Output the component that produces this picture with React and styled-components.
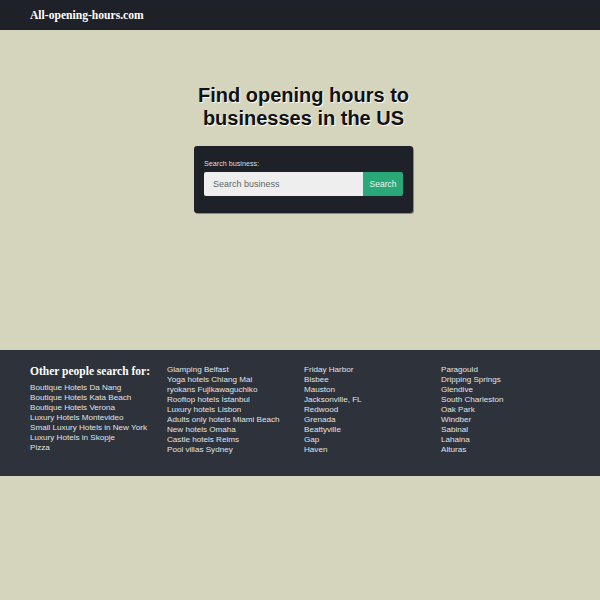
import React from "react";
import styled, { createGlobalStyle } from "styled-components";

const GlobalStyle = createGlobalStyle`
    body {
        margin: 0;
        background-color: #d5d5bd;
        font-family: "Liberation Sans", Arial, sans-serif;
    }
`;

const columns = [
    [
        "Glamping Belfast",
        "Yoga hotels Chiang Mai",
        "ryokans Fujikawaguchiko",
        "Rooftop hotels İstanbul",
        "Luxury hotels Lisbon",
        "Adults only hotels Miami Beach",
        "New hotels Omaha",
        "Castle hotels Reims",
        "Pool villas Sydney",
    ],
    [
        "Friday Harbor",
        "Bisbee",
        "Mauston",
        "Jacksonville, FL",
        "Redwood",
        "Grenada",
        "Beattyville",
        "Gap",
        "Haven",
    ],
    [
        "Paragould",
        "Dripping Springs",
        "Glendive",
        "South Charleston",
        "Oak Park",
        "Windber",
        "Sabinal",
        "Lahaina",
        "Alturas",
    ],
];

const popular = [
    "Boutique Hotels Da Nang",
    "Boutique Hotels Kata Beach",
    "Boutique Hotels Verona",
    "Luxury Hotels Montevideo",
    "Small Luxury Hotels in New York",
    "Luxury Hotels in Skopje",
    "Pizza",
];

const App = () => {
    return (
        <>
            <GlobalStyle />
            <Nav>
                <Logo>All-opening-hours.com</Logo>
            </Nav>
            <Main>
                <Title>Find opening hours to businesses in the US</Title>
                <Card>
                    <Label>Search business:</Label>
                    <SearchRow>
                        <Input placeholder="Search business" />
                        <Button>Search</Button>
                    </SearchRow>
                </Card>
            </Main>
            <Footer>
                <Column>
                    <FooterHeading>Other people search for:</FooterHeading>
                    {popular.map((item) => (
                        <Link key={item}>{item}</Link>
                    ))}
                </Column>
                {columns.map((col, i) => (
                    <Column key={i}>
                        {col.map((item) => (
                            <Link key={item}>{item}</Link>
                        ))}
                    </Column>
                ))}
            </Footer>
        </>
    );
};

const Nav = styled.div`
    background-color: #1f2128;
    height: 30px;
    display: flex;
    align-items: center;
    padding: 0 30px;
`;

const Logo = styled.div`
    font-family: "Liberation Serif", "Times New Roman", serif;
    font-weight: bold;
    font-size: 11.6px;
    color: #fff;
`;

const Main = styled.div`
    height: 320px;
    display: flex;
    flex-direction: column;
    align-items: center;
    padding: 54px 0 0 7px;
    box-sizing: border-box;
`;

const Title = styled.h1`
    margin: 0 0 16px 0;
    max-width: 240px;
    text-align: center;
    font-size: 20px;
    line-height: 23px;
    font-weight: bold;
    color: #111;
    text-shadow: 1px 1px 1px #fff;
`;

const Card = styled.div`
    width: 219px;
    box-sizing: border-box;
    background-color: #1f2128;
    border-radius: 3px;
    box-shadow: 1px 1px 0 #8a8a80;
    padding: 13px 10px 17px 10px;
`;

const Label = styled.div`
    font-size: 7.2px;
    color: #dcdcdc;
    margin-bottom: 4px;
`;

const SearchRow = styled.div`
    display: flex;
    height: 24px;
`;

const Input = styled.input`
    flex: 1;
    min-width: 0;
    border: none;
    outline: none;
    background-color: #eeeeee;
    border-radius: 2px 0 0 2px;
    padding: 0 9px;
    font-family: "Liberation Sans", Arial, sans-serif;
    font-size: 9px;
    color: #333;

    &::placeholder {
        color: #666;
    }
`;

const Button = styled.button`
    width: 40px;
    border: none;
    background-color: #2aa877;
    color: #e8f5ee;
    border-radius: 0 2px 2px 0;
    padding: 0;
    font-family: "Liberation Sans", Arial, sans-serif;
    font-size: 8.5px;
`;

const Footer = styled.div`
    background-color: #2e333b;
    display: grid;
    grid-template-columns: repeat(4, 137px);
    padding: 15px 30px 22px 30px;
    height: 126px;
    box-sizing: border-box;
`;

const Column = styled.div`
    display: flex;
    flex-direction: column;
`;

const FooterHeading = styled.div`
    font-family: "Liberation Serif", "Times New Roman", serif;
    font-weight: bold;
    font-size: 11.5px;
    color: #fff;
    line-height: 13px;
    margin-bottom: 5px;
`;

const Link = styled.div`
    font-size: 8.1px;
    line-height: 10px;
    color: #e0e2e6;
    white-space: nowrap;
`;

export default App;
